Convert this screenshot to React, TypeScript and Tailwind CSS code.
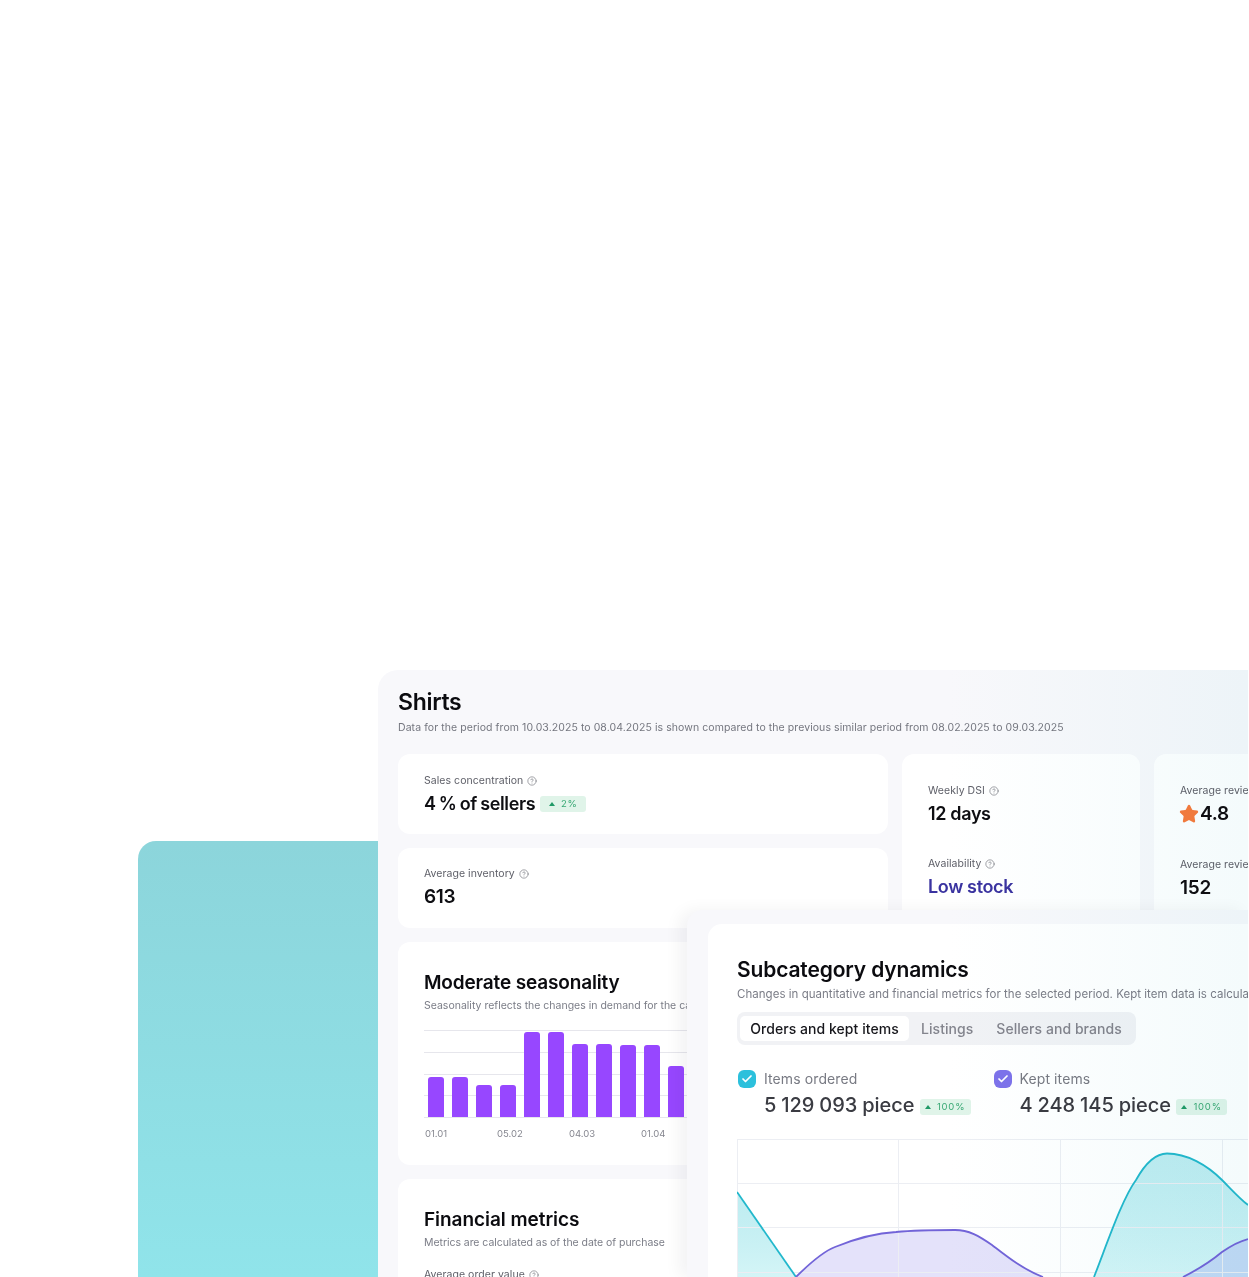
import { Check, CircleHelp, Star } from 'lucide-react';

const bars = [40, 40, 32.5, 32.5, 85, 85, 73, 73, 72, 72, 51];
const barLabels = ['01.01', '05.02', '04.03', '01.04'];

const Label = ({ text }: { text: string }) => (
  <div className="flex items-center gap-[4px] text-[10.5px] leading-[14px] tracking-[0.05px] text-[#5f6069]">
    <span>{text}</span>
    <CircleHelp className="w-[10px] h-[10px] text-[#6c6d75]" strokeWidth={1.5} />
  </div>
);

const Value = ({ children, className = 'text-[#0e0e12]' }: { children: React.ReactNode; className?: string }) => (
  <div className={`text-[18px] leading-[26px] font-semibold tracking-[-0.35px] ${className}`}>{children}</div>
);

const Badge = ({ value, className }: { value: string; className: string }) => (
  <span className={`flex h-[16px] items-center justify-center gap-[6px] rounded-[3px] bg-[#e0f4e9] text-[9.5px] tracking-[0.8px] text-[#38a874] ${className}`}>
    <svg viewBox="0 0 6 4" className="w-[6px] h-[4px] fill-[#1f9a66]">
      <path d="M3 0 6 4H0z" />
    </svg>
    {value}
  </span>
);

const Legend = ({ label, value, color }: { label: string; value: string; color: string }) => (
  <div className="w-[256px]">
    <div className="flex items-center gap-[8px] pl-[1px]">
      <span className={`flex w-[18px] h-[18px] items-center justify-center rounded-[6px] ${color}`}>
        <Check className="w-[12px] h-[12px] text-white" strokeWidth={3.5} />
      </span>
      <span className="text-[14px] leading-[18px] tracking-[0.1px] text-[#787a83]">{label}</span>
    </div>
    <div className="mt-[4px] flex items-center gap-[5px] pl-[27px]">
      <span className="text-[20px] leading-[26px] font-medium [word-spacing:-0.5px] text-[#3a3b42]">{value}</span>
      <Badge value="100%" className="w-[51px] mt-[4px]" />
    </div>
  </div>
);

const DynamicsChart = () => (
  <svg viewBox="0 0 511 138" className="block w-[511px] h-[138px]">
    <defs>
      <linearGradient id="tealFill" x1="0" y1="0" x2="0" y2="1">
        <stop offset="0" stopColor="#a9e6ec" stopOpacity="0.75" />
        <stop offset="1" stopColor="#d4f5f7" />
      </linearGradient>
    </defs>
    <path d="M0 53 59 138V138H0Z" fill="url(#tealFill)" />
    <path d="M357 138C370 105 385 60 399 41C409 23 420 14.500 430 14.500C450 14.500 470 26 485 41C495 51 503 60 511 66V138Z" fill="url(#tealFill)" />
    <path d="M59 138C72 125 85 113 98 108C120 99 140 94 159 93C180 91 200 91 218 91C232 91 242 97 255 106C268 116 285 130 306 138Z" fill="#e4e2fa" />
    <path d="M446 138C460 131 473 123 485 113C495 106 503 102 511 100V138Z" fill="#c3daf5" />
    <g stroke="#eceef3" strokeWidth="1" fill="none">
      <path d="M0.500 0V138M161.500 0V138M323.500 0V138M485.500 0V138" />
      <path d="M0 0.500H511M0 44.500H511M0 88.500H511M0 133.500H511" />
    </g>
    <path d="M0 53 59 138" stroke="#22b8cc" strokeWidth="1.800" fill="none" />
    <path d="M357 138C370 105 385 60 399 41C409 23 420 14.500 430 14.500C450 14.500 470 26 485 41C495 51 503 60 511 66" stroke="#22b8cc" strokeWidth="1.800" fill="none" />
    <path d="M59 138C72 125 85 113 98 108C120 99 140 94 159 93C180 91 200 91 218 91C232 91 242 97 255 106C268 116 285 130 306 138" stroke="#7264d8" strokeWidth="1.800" fill="none" />
    <path d="M446 138C460 131 473 123 485 113C495 106 503 102 511 100" stroke="#7264d8" strokeWidth="1.800" fill="none" />
  </svg>
);

export default function App() {
  return (
    <div className="relative w-[1248px] h-[1277px] overflow-hidden bg-white font-['Inter',sans-serif]">
      {/* teal backdrop */}
      <div className="absolute left-[138px] top-[841px] w-[400px] h-[436px] rounded-tl-[18px] bg-gradient-to-b from-[#8cd5db] to-[#90e4ea]" />

      {/* shirts window */}
      <div className="absolute left-[378px] top-[670px] w-[870px] h-[607px] overflow-hidden rounded-tl-[20px] bg-[#f8f8fb] pl-[20px] pt-[18px]">
        <h1 className="text-[23px] leading-[28px] font-semibold tracking-[-0.3px] text-[#0b0b0f]">Shirts</h1>
        <p className="mt-[4px] text-[10.5px] leading-[15px] tracking-[0.07px] whitespace-nowrap text-[#74767f]">
          Data for the period from 10.03.2025 to 08.04.2025 is shown compared to the previous similar period from 08.02.2025 to 09.03.2025
        </p>

        <div className="mt-[19px] flex items-start gap-[14px]">
          <div className="flex w-[490px] shrink-0 flex-col gap-[14px]">
            <div className="h-[80px] rounded-[12px] bg-white pl-[26px] pt-[20px]">
              <Label text="Sales concentration" />
              <div className="mt-[3px] flex items-center gap-[5px]">
                <Value className="text-[#0e0e12] [word-spacing:-1px]">4 % of sellers</Value>
                <Badge value="2%" className="w-[46px]" />
              </div>
            </div>
            <div className="h-[80px] rounded-[12px] bg-white pl-[26px] pt-[19px]">
              <Label text="Average inventory" />
              <div className="mt-[3px] text-[19px] leading-[26px] font-semibold tracking-[-0.3px] text-[#0e0e12]">613</div>
            </div>
            <div className="h-[223px] rounded-[12px] bg-white pl-[26px] pt-[28px]">
              <h2 className="text-[19px] leading-[26px] font-semibold tracking-[-0.15px] text-[#0b0b0f]">Moderate seasonality</h2>
              <p className="mt-[2px] text-[10.5px] leading-[15px] whitespace-nowrap text-[#7b7d87]">
                Seasonality reflects the changes in demand for the category
              </p>
              <div className="relative mt-[17px] h-[88px] w-[300px]">
                <div className="absolute inset-0 flex flex-col justify-between">
                  {[0, 1, 2, 3, 4].map((i) => (
                    <div key={i} className="h-px bg-[#e6e6ec]" />
                  ))}
                </div>
                <div className="relative flex h-[87px] items-end gap-[8px] pl-[4px]">
                  {bars.map((h, i) => (
                    <div key={i} className="w-[16px] shrink-0 rounded-t-[3px] bg-[#9747ff]" style={{ height: h }} />
                  ))}
                </div>
              </div>
              <div className="mt-[9px] flex pl-[1px] text-[9.5px] leading-[14px] text-[#85868f]">
                {barLabels.map((d) => (
                  <span key={d} className="w-[72px]">{d}</span>
                ))}
              </div>
            </div>
            <div className="h-[140px] rounded-[12px] bg-white pl-[26px] pt-[28px]">
              <h2 className="text-[19px] leading-[26px] font-semibold tracking-[-0.05px] text-[#0b0b0f]">Financial metrics</h2>
              <p className="mt-[2px] mb-[18px] text-[10.5px] leading-[15px] tracking-[-0.05px] text-[#7b7d87]">
                Metrics are calculated as of the date of purchase
              </p>
              <Label text="Average order value" />
            </div>
          </div>

          <div className="h-[170px] w-[238px] shrink-0 rounded-[12px] bg-white pl-[26px] pt-[30px]">
            <Label text="Weekly DSI" />
            <div className="mt-[3px]">
              <Value>12 days</Value>
            </div>
            <div className="mt-[30px]">
              <Label text="Availability" />
              <div className="mt-[3px]">
                <Value className="text-[#3a33a0]">Low stock</Value>
              </div>
            </div>
          </div>

          <div className="h-[170px] w-[238px] shrink-0 rounded-[12px] bg-white pl-[26px] pt-[30px]">
            <div className="text-[10.5px] leading-[14px] tracking-[0.05px] whitespace-nowrap text-[#5f6069]">Average review rating</div>
            <div className="mt-[3px] flex items-center gap-[1px]">
              <Star className="-ml-[1px] w-[20px] h-[20px] fill-[#f97b3d] text-[#f97b3d]" strokeWidth={2} />
              <span className="text-[19px] leading-[26px] font-semibold tracking-[-0.3px] text-[#0e0e12]">4.8</span>
            </div>
            <div className="mt-[31px] text-[10.5px] leading-[14px] tracking-[0.05px] whitespace-nowrap text-[#5f6069]">Average reviews</div>
            <div className="mt-[3px] text-[19px] leading-[26px] font-semibold tracking-[-0.3px] text-[#0e0e12]">152</div>
          </div>
        </div>
      </div>

      {/* subcategory window */}
      <div className="absolute left-[687px] top-[910px] w-[561px] h-[367px] overflow-hidden rounded-tl-[16px] bg-[#f8f8fb] pl-[21px] pt-[14px] shadow-[-8px_0_16px_rgba(20,20,40,0.05)]">
        <div className="h-[353px] rounded-tl-[14px] bg-white pl-[29px] pt-[32px]">
          <h2 className="text-[21px] leading-[28px] font-semibold tracking-[-0.15px] text-[#0b0b0f]">Subcategory dynamics</h2>
          <p className="mt-[2px] text-[11.5px] leading-[16px] tracking-[0.03px] whitespace-nowrap text-[#7b7d87]">
            Changes in quantitative and financial metrics for the selected period. Kept item data is calculated
          </p>
          <div className="mt-[10px] flex h-[33px] w-[399px] items-center rounded-[8px] bg-[#f1f2f5] pl-[3px] text-[14px] font-medium tracking-[0.05px]">
            <span className="flex h-[25px] w-[169px] items-center justify-center rounded-[5px] bg-white text-[#17171c]">Orders and kept items</span>
            <span className="ml-[12px] text-[#83848d]">Listings</span>
            <span className="ml-[23px] text-[#83848d]">Sellers and brands</span>
          </div>
          <div className="mt-[25px] flex">
            <Legend label="Items ordered" value="5 129 093 piece" color="bg-[#2cc0dc]" />
            <Legend label="Kept items" value="4 248 145 piece" color="bg-[#7d72ea]" />
          </div>
          <div className="mt-[21px]">
            <DynamicsChart />
          </div>
        </div>
      </div>

      {/* cool tint fading in on the right */}
      <div className="absolute right-0 top-[670px] bottom-0 w-[300px] bg-gradient-to-r from-white to-[#f4fbfc] mix-blend-multiply" />
    </div>
  );
}
